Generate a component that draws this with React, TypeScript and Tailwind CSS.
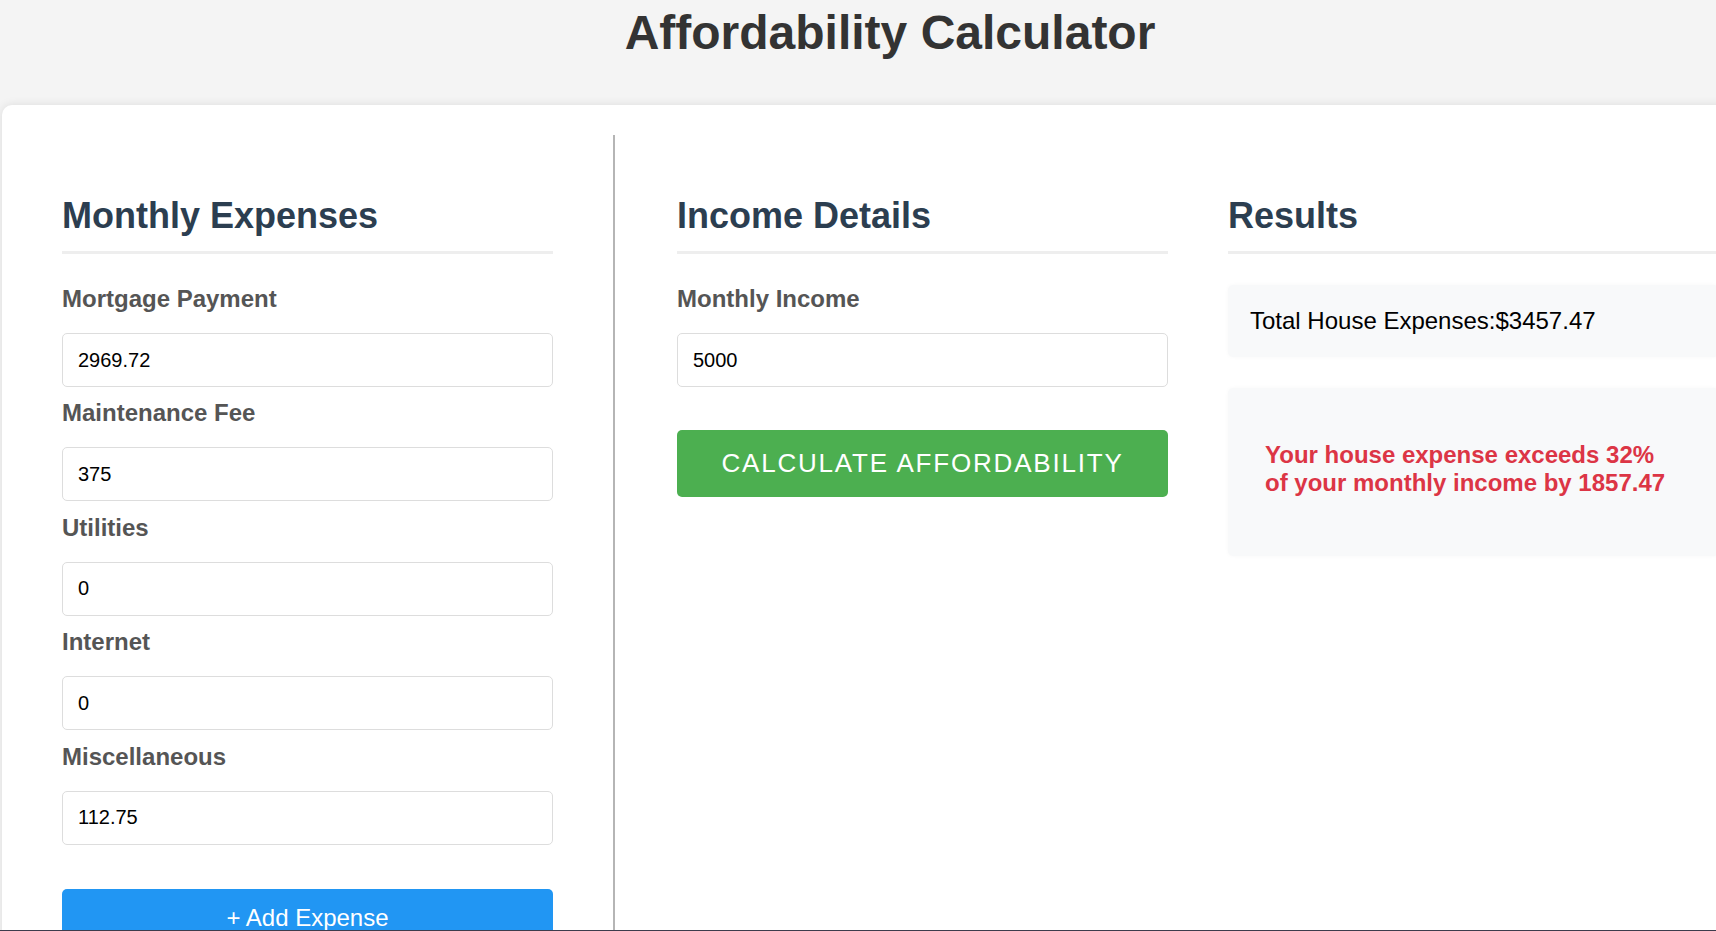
import React, { useState } from 'react';

interface Expense {
  id: string;
  label: string;
  value: string;
}

const INITIAL_EXPENSES: Expense[] = [
  { id: 'mortgage', label: 'Mortgage Payment', value: '2969.72' },
  { id: 'maintenance', label: 'Maintenance Fee', value: '375' },
  { id: 'utilities', label: 'Utilities', value: '0' },
  { id: 'internet', label: 'Internet', value: '0' },
  { id: 'misc', label: 'Miscellaneous', value: '112.75' },
];

const SectionTitle: React.FC<{ children: React.ReactNode }> = ({ children }) => (
  <h2 className="text-[36px] font-bold leading-[40px] text-[#2c3e50] pb-[15px] border-b-[3px] border-[#eeeeee]">
    {children}
  </h2>
);

const Field: React.FC<{
  label: string;
  value: string;
  onChange: (v: string) => void;
}> = ({ label, value, onChange }) => (
  <div className="flex flex-col">
    <label className="block mt-[1px] text-[24px] font-bold leading-[28px] text-[#555] mb-[20px]">{label}</label>
    <input
      type="text"
      value={value}
      onChange={(e) => onChange(e.target.value)}
      className="w-full h-[54px] px-[15px] text-[20px] text-black bg-white border border-[#dddddd] rounded-[5px] outline-none"
    />
  </div>
);

export default function App() {
  const [expenses, setExpenses] = useState<Expense[]>(INITIAL_EXPENSES);
  const [income, setIncome] = useState('5000');

  const total = expenses.reduce((sum, e) => sum + (parseFloat(e.value) || 0), 0);
  const limit = (parseFloat(income) || 0) * 0.32;
  const excess = total - limit;

  const updateExpense = (id: string, value: string) => {
    setExpenses((prev) => prev.map((e) => (e.id === id ? { ...e, value } : e)));
  };

  const addExpense = () => {
    setExpenses((prev) => [...prev, { id: `extra-${prev.length}`, label: 'Other', value: '0' }]);
  };

  return (
    <div className="min-h-screen w-full overflow-hidden bg-[#f4f4f4] font-['Liberation_Sans',Arial,sans-serif]">
      <div className="w-[1776px] ml-[2px]">
        <h1 className="pt-[9px] text-center text-[48px] font-bold leading-[48px] text-[#333333]">
          Affordability Calculator
        </h1>

        <div className="mt-[48px] flex bg-white rounded-[10px] shadow-[0_0_10px_rgba(0,0,0,0.1)] pt-[30px] pb-[30px] pl-[60px] pr-[59px]">
          {/* Monthly expenses */}
          <div className="w-[491px] pt-[61px] shrink-0">
            <SectionTitle>Monthly Expenses</SectionTitle>
            <div className="mt-[30px] flex flex-col gap-[11.4px]">
              {expenses.map((e) => (
                <Field key={e.id} label={e.label} value={e.value} onChange={(v) => updateExpense(e.id, v)} />
              ))}
            </div>
            <button
              onClick={addExpense}
              className="mt-[44px] w-full py-[15px] rounded-[5px] bg-[#2196f3] text-white text-[24px] leading-[27.6px]"
            >
              + Add Expense
            </button>
          </div>

          {/* Income details */}
          <div className="ml-[60px] border-l-2 border-[#b5b5b5] pl-[62px] shrink-0">
            <div className="w-[491px] pt-[61px]">
              <SectionTitle>Income Details</SectionTitle>
              <div className="mt-[30px]">
                <Field label="Monthly Income" value={income} onChange={setIncome} />
              </div>
              <button className="mt-[43px] w-full h-[67px] rounded-[5px] bg-[#4caf50] text-white text-[26px] tracking-[1.8px] uppercase">
                Calculate Affordability
              </button>
            </div>
          </div>

          {/* Results */}
          <div className="ml-[60px] w-[491px] pt-[61px] shrink-0">
            <SectionTitle>Results</SectionTitle>
            <div className="mt-[31px] h-[72px] flex items-center px-[22px] rounded-[5px] bg-[#f8f9fa] shadow-[0_0_4px_rgba(0,0,0,0.03)] text-[24px] text-black">
              Total House Expenses:${total.toFixed(2)}
            </div>
            <div className="mt-[31px] h-[168px] pt-[53px] pl-[37px] rounded-[5px] bg-[#f8f9fa] shadow-[0_0_4px_rgba(0,0,0,0.03)]">
              <p className="w-[408px] text-[24px] font-bold leading-[27.6px] text-[#dc3545]">
                {excess > 0
                  ? `Your house expense exceeds 32% of your monthly income by ${excess.toFixed(2)}`
                  : 'Your house expense is within 32% of your monthly income'}
              </p>
            </div>
          </div>
        </div>
      </div>
      <div className="fixed bottom-0 left-0 right-0 h-px bg-[#3c3c4c]" />
    </div>
  );
}
